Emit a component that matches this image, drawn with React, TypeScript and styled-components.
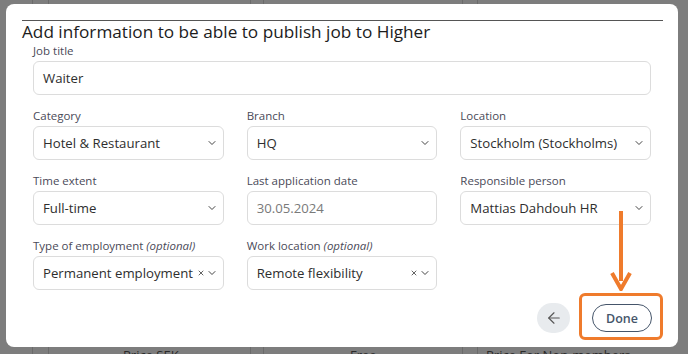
import styled, { createGlobalStyle } from "styled-components";
import { ArrowLeft, ChevronDown, X } from "lucide-react";

const GlobalStyle = createGlobalStyle`
    html, body {
        margin: 0;
        padding: 0;
    }
    body {
        font-family: "Open Sans", "Noto Sans", sans-serif;
        background: #7d7d7d;
    }
`

const Backdrop = styled.div`
    position: relative;
    width: 688px;
    height: 354px;
    overflow: hidden;
    padding: 4px 10px 0 6px;
    box-sizing: border-box;
    background-color: #7d7d7d;
    background-image:
        linear-gradient(#6b6b6b, #6b6b6b),
        linear-gradient(#6b6b6b, #6b6b6b),
        linear-gradient(#6b6b6b, #6b6b6b),
        linear-gradient(#6b6b6b, #6b6b6b),
        linear-gradient(#6b6b6b, #6b6b6b),
        linear-gradient(#6b6b6b, #6b6b6b);
    background-size: 1px 100%;
    background-repeat: no-repeat;
    background-position: 32px 0, 48px 0, 250px 0, 263px 0, 462px 0, 477px 0;
`

const Modal = styled.div`
    position: relative;
    height: 343px;
    background: #fff;
    border-radius: 8px;
    padding: 16px 15px 0 16px;
    box-sizing: border-box;
`

const Title = styled.h2`
    margin: 0;
    border-top: 1px solid #555;
    padding-top: 1px;
    font-size: 17.2px;
    line-height: 20px;
    font-weight: 500;
    color: #1c1c1c;
`

const Form = styled.div`
    padding: 1px 12px 0 11px;
    display: flex;
    flex-direction: column;
    gap: 13px;
`

const Row = styled.div`
    display: grid;
    grid-template-columns: repeat(3, 1fr);
    column-gap: 23px;
`

const Field = styled.div<{ $span?: number }>`
    display: flex;
    flex-direction: column;
    gap: 2px;
    grid-column: span ${p => p.$span ?? 1};
    min-width: 0;
`

const Label = styled.label`
    font-size: 11.5px;
    line-height: 16px;
    color: #4a4a58;
    em {
        font-style: italic;
    }
`

const Box = styled.div<{ $muted?: boolean }>`
    height: 34px;
    box-sizing: border-box;
    border: 1px solid #dcdcdc;
    border-radius: 6px;
    display: flex;
    align-items: center;
    padding: 0 5px 0 9px;
    font-size: 13.2px;
    color: ${p => (p.$muted ? "#7a7a7a" : "#2e2e2e")};
    white-space: nowrap;
`

const Value = styled.span`
    flex: 1;
    min-width: 0;
`

const Icons = styled.span`
    display: flex;
    align-items: center;
    gap: 1px;
    padding-left: 3px;
    color: #444;
    flex-shrink: 0;
`

const Actions = styled.div`
    display: flex;
    justify-content: flex-end;
    align-items: center;
    gap: 22px;
    padding: 13px 11px 0 0;
`

const BackButton = styled.button`
    width: 33px;
    height: 30px;
    border: none;
    border-radius: 15px;
    background: #e8ebee;
    color: #555;
    display: flex;
    align-items: center;
    justify-content: center;
    padding: 0;
`

const DoneButton = styled.button`
    width: 60px;
    height: 28px;
    border: 1.5px solid #45556a;
    border-radius: 14px;
    background: #fff;
    color: #45556a;
    font-family: "Open Sans", sans-serif;
    font-size: 12.5px;
    font-weight: 600;
    padding: 0;
`

const Highlight = styled.div`
    position: absolute;
    left: 573px;
    top: 289px;
    width: 84px;
    height: 47px;
    box-sizing: border-box;
    border: 3.5px solid #ef7b2c;
    border-radius: 6px;
`

const Arrow = styled.svg`
    position: absolute;
    left: 600px;
    top: 207px;
`

const UnderRow = styled.div`
    display: grid;
    grid-template-columns: 117px 227px 136px 1fr;
    font-size: 13px;
    line-height: 13px;
    color: #2b2b2b;
    margin-top: 2px;
`

function Select({ value, clearable }: { value: string; clearable?: boolean }) {
    return (
        <Box>
            <Value>{value}</Value>
            <Icons>
                {clearable && <X size={8} strokeWidth={2.5} />}
                <ChevronDown size={12} strokeWidth={2} />
            </Icons>
        </Box>
    )
}

export default function App() {
    return (
        <>
            <GlobalStyle />
            <Backdrop>
                <Modal>
                    <Title>Add information to be able to publish job to Higher</Title>
                    <Form>
                        <Row>
                            <Field $span={3}>
                                <Label>Job title</Label>
                                <Box><Value>Waiter</Value></Box>
                            </Field>
                        </Row>
                        <Row>
                            <Field>
                                <Label>Category</Label>
                                <Select value="Hotel & Restaurant" />
                            </Field>
                            <Field>
                                <Label>Branch</Label>
                                <Select value="HQ" />
                            </Field>
                            <Field>
                                <Label>Location</Label>
                                <Select value="Stockholm (Stockholms)" />
                            </Field>
                        </Row>
                        <Row>
                            <Field>
                                <Label>Time extent</Label>
                                <Select value="Full-time" />
                            </Field>
                            <Field>
                                <Label>Last application date</Label>
                                <Box $muted><Value>30.05.2024</Value></Box>
                            </Field>
                            <Field>
                                <Label>Responsible person</Label>
                                <Select value="Mattias Dahdouh HR" />
                            </Field>
                        </Row>
                        <Row>
                            <Field>
                                <Label>Type of employment <em>(optional)</em></Label>
                                <Select value="Permanent employment" clearable />
                            </Field>
                            <Field>
                                <Label>Work location <em>(optional)</em></Label>
                                <Select value="Remote flexibility" clearable />
                            </Field>
                        </Row>
                    </Form>
                    <Actions>
                        <BackButton aria-label="Back"><ArrowLeft size={18} strokeWidth={1.5} /></BackButton>
                        <DoneButton>Done</DoneButton>
                    </Actions>
                    <Highlight />
                    <Arrow width="30" height="80" viewBox="0 0 30 80">
                        <line x1="15" y1="0" x2="15" y2="70" stroke="#ef7b2c" strokeWidth="4" />
                        <path d="M6 62 L15 78 L24 62" fill="none" stroke="#ef7b2c" strokeWidth="4" strokeLinejoin="miter" />
                    </Arrow>
                </Modal>
                <UnderRow>
                    <span />
                    <span>Price SEK</span>
                    <span>Free</span>
                    <span>Price For Non-members</span>
                </UnderRow>
            </Backdrop>
        </>
    )
}
